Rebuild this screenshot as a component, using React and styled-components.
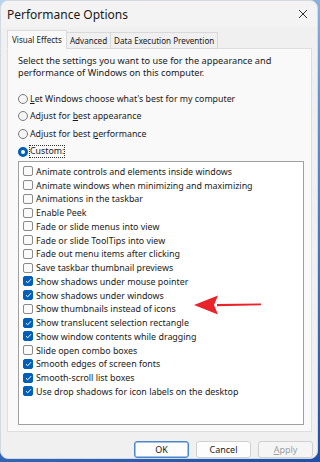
import React from 'react';
import styled, { createGlobalStyle } from 'styled-components';

const GlobalStyle = createGlobalStyle`
  html, body {
    margin: 0;
    padding: 0;
  }
  body {
    width: 320px;
    height: 462px;
    overflow: hidden;
    background: linear-gradient(160deg, #b7d3ee 0%, #5a8fd2 40%, #1f4fa6 100%);
    font-family: "Noto Sans", "Open Sans", sans-serif;
  }
`;

const Window = styled.div`
  position: relative;
  box-sizing: border-box;
  width: 318px;
  height: 459px;
  background: #f0f0f0;
  border: 1px solid #d3d9e0;
  border-radius: 8px;
  display: flex;
  flex-direction: column;
  overflow: hidden;
`;

const TitleBar = styled.div`
  height: 28px;
  display: flex;
  align-items: center;
  justify-content: space-between;
  padding: 0 8px 0 6px;
  background: #f3f3f3;
`;

const Title = styled.div`
  font-size: 12px;
  color: #1a1a1a;
`;

const CloseButton = styled.div`
  width: 12px;
  height: 12px;
  display: flex;
  align-items: center;
  justify-content: center;
`;

const Body = styled.div`
  flex: 1;
  display: flex;
  flex-direction: column;
  padding: 3px 5px 0 6px;
`;

const Tabs = styled.div`
  display: flex;
  align-items: flex-end;
  height: 19px;
  position: relative;
  z-index: 1;
`;

const Tab = styled.div`
  box-sizing: border-box;
  font-size: 8.1px;
  color: #1a1a1a;
  padding: 0 ${p => (p.$active ? '4px' : '3px')};
  height: ${p => (p.$active ? '19px' : '17px')};
  line-height: ${p => (p.$active ? '18px' : '16px')};
  background: ${p => (p.$active ? '#f9f9f9' : '#f0f0f0')};
  border: 1px solid #d9d9d9;
  border-bottom: ${p => (p.$active ? '1px solid #f9f9f9' : '1px solid #d9d9d9')};
  margin-right: -1px;
  white-space: nowrap;
`;

const Panel = styled.div`
  box-sizing: border-box;
  height: 384px;
  margin-top: -1px;
  background: #f9f9f9;
  border: 1px solid #dedede;
  padding: 6px 10px 0 10px;
  display: flex;
  flex-direction: column;
`;

const Intro = styled.p`
  margin: 0;
  font-size: 9.2px;
  line-height: 12px;
  color: #1a1a1a;
`;

const RadioGroup = styled.div`
  display: flex;
  flex-direction: column;
  margin-top: 11px;
`;

const RadioRow = styled.label`
  display: flex;
  align-items: center;
  height: 17.6px;
  font-size: 8.8px;
  color: #1a1a1a;
`;

const RadioDot = styled.span`
  box-sizing: border-box;
  width: 10px;
  height: 10px;
  border-radius: 50%;
  margin-right: 2px;
  border: ${p => (p.$on ? '3px solid #005fb8' : '1px solid #7a7a7a')};
  background: ${p => (p.$on ? '#ffffff' : '#f5f5f5')};
`;

const Focus = styled.span`
  outline: 1px dotted #333;
  outline-offset: 0;
  line-height: 11px;
`;

const ListBox = styled.div`
  box-sizing: border-box;
  margin-top: 1px;
  width: 286px;
  height: 264px;
  background: #ffffff;
  border: 1px solid #a0a0a0;
  padding: 2px 0 0 4px;
  display: flex;
  flex-direction: column;
`;

const CheckRow = styled.div`
  display: flex;
  align-items: center;
  height: 13.75px;
  font-size: 8.9px;
  color: #1a1a1a;
  white-space: nowrap;
`;

const Box = styled.span`
  box-sizing: border-box;
  width: 10px;
  height: 10px;
  border-radius: 2px;
  margin-right: 3px;
  display: flex;
  align-items: center;
  justify-content: center;
  background: ${p => (p.$on ? '#005fb8' : '#fafafa')};
  border: ${p => (p.$on ? '1px solid #005fb8' : '1px solid #8a8a8a')};
`;

const Footer = styled.div`
  display: flex;
  justify-content: flex-end;
  gap: 7px;
  padding: 9px 4px 0 0;
  margin-right: -5px;
`;

const Button = styled.div`
  box-sizing: border-box;
  width: 55px;
  height: 17px;
  display: flex;
  align-items: center;
  justify-content: center;
  font-size: 9px;
  border-radius: 3px;
  background: ${p => (p.$disabled ? '#f5f5f5' : '#fdfdfd')};
  color: ${p => (p.$disabled ? '#a0a0a0' : '#1a1a1a')};
  border: 1px solid ${p => (p.$primary ? '#4a86c8' : '#d0d0d0')};
  box-shadow: ${p => (p.$primary ? 'inset 0 0 0 0.5px #4a86c8' : 'none')};
`;

const Arrow = styled.svg`
  position: absolute;
  left: 192px;
  top: 293px;
`;

const effects = [
  ['Animate controls and elements inside windows', false],
  ['Animate windows when minimizing and maximizing', false],
  ['Animations in the taskbar', false],
  ['Enable Peek', false],
  ['Fade or slide menus into view', false],
  ['Fade or slide ToolTips into view', false],
  ['Fade out menu items after clicking', false],
  ['Save taskbar thumbnail previews', false],
  ['Show shadows under mouse pointer', true],
  ['Show shadows under windows', true],
  ['Show thumbnails instead of icons', false],
  ['Show translucent selection rectangle', true],
  ['Show window contents while dragging', true],
  ['Slide open combo boxes', false],
  ['Smooth edges of screen fonts', true],
  ['Smooth-scroll list boxes', true],
  ['Use drop shadows for icon labels on the desktop', true],
];

function Check() {
  return (
    <svg width="7" height="6" viewBox="0 0 7 6">
      <path d="M1 3.2 L2.7 4.8 L6 1.2" fill="none" stroke="#fff" strokeWidth="1" />
    </svg>
  );
}

export default function App() {
  return (
    <>
      <GlobalStyle />
      <Window>
        <TitleBar>
          <Title>Performance Options</Title>
          <CloseButton>
            <svg width="10" height="10" viewBox="0 0 10 10">
              <path d="M1 1 L9 9 M9 1 L1 9" stroke="#333" strokeWidth="1" />
            </svg>
          </CloseButton>
        </TitleBar>
        <Body>
          <Tabs>
            <Tab $active>Visual Effects</Tab>
            <Tab>Advanced</Tab>
            <Tab>Data Execution Prevention</Tab>
          </Tabs>
          <Panel>
            <Intro>
              Select the settings you want to use for the appearance and
              <br />
              performance of Windows on this computer.
            </Intro>
            <RadioGroup>
              <RadioRow>
                <RadioDot />
                <span><u>L</u>et Windows choose what's best for my computer</span>
              </RadioRow>
              <RadioRow>
                <RadioDot />
                <span>Adjust for <u>b</u>est appearance</span>
              </RadioRow>
              <RadioRow>
                <RadioDot />
                <span>Adjust for best <u>p</u>erformance</span>
              </RadioRow>
              <RadioRow>
                <RadioDot $on />
                <Focus>Custom:</Focus>
              </RadioRow>
            </RadioGroup>
            <ListBox>
              {effects.map(([label, on]) => (
                <CheckRow key={label}>
                  <Box $on={on}>{on && <Check />}</Box>
                  {label}
                </CheckRow>
              ))}
            </ListBox>
          </Panel>
          <Footer>
            <Button $primary>OK</Button>
            <Button>Cancel</Button>
            <Button $disabled><span><u>A</u>pply</span></Button>
          </Footer>
        </Body>
        <Arrow width="70" height="22" viewBox="0 0 70 22">
          <path d="M24 10 L68 9.6 L68 11.2 L24 12.2 Z" fill="#e8232a" />
          <path d="M1 11 L25 1.5 L21 11 L25 20.5 Z" fill="#e8232a" />
        </Arrow>
      </Window>
    </>
  );
}
